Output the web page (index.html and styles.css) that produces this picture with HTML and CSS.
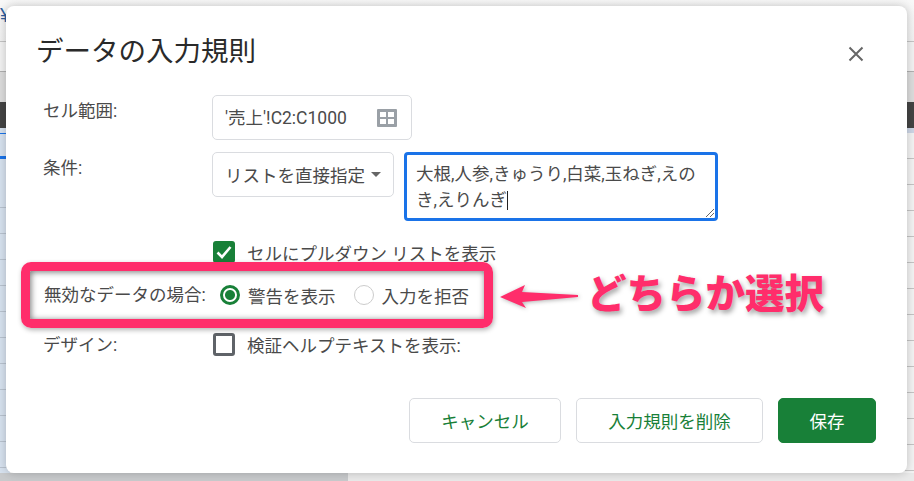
FILE: index.html
```html
<!DOCTYPE html>
<html lang="ja">
<head>
  <meta charset="UTF-8">
  <meta name="viewport" content="width=device-width, initial-scale=1.0">
  <title>データの入力規則</title>
  <link rel="stylesheet" href="styles.css">
</head>
<body>
  <!-- spreadsheet behind the dialog, only its edges show -->
  <div class="sheet">
    <div class="sheet-top">
      <span class="yen">¥</span>
    </div>
    <div class="sheet-bar"></div>
    <div class="sheet-dark"></div>
    <div class="sheet-cells">
      <div class="cells-left">
        <div class="cell-first"></div>
        <div class="cell-accent"></div>
        <div class="cell"></div><div class="cell"></div><div class="cell"></div><div class="cell"></div><div class="cell"></div>
        <div class="cell"></div><div class="cell"></div><div class="cell"></div><div class="cell"></div><div class="cell"></div>
        <div class="cell"></div>
      </div>
      <div class="cells-right">
        <div class="cell"></div><div class="cell"></div><div class="cell"></div><div class="cell"></div><div class="cell"></div>
        <div class="cell"></div><div class="cell"></div><div class="cell"></div><div class="cell"></div><div class="cell"></div>
        <div class="cell"></div><div class="cell"></div><div class="cell"></div>
      </div>
    </div>
    <div class="scrollbar"><div class="scroll-thumb"></div></div>
  </div>

  <div class="dialog">
    <div class="dialog-head">
      <h1 class="dialog-title">データの入力規則</h1>
      <svg class="close-icon" width="16" height="16" viewBox="0 0 16 16">
        <path d="M1.5 1.5L14.5 14.5M14.5 1.5L1.5 14.5" stroke="#666" stroke-width="2" fill="none"/>
      </svg>
    </div>

    <div class="form-row row-range">
      <div class="form-label">セル範囲:</div>
      <div class="range-field">
        <span class="range-text">'売上'!C2:C1000</span>
        <svg width="20" height="18" viewBox="0 0 20 18">
          <rect width="20" height="18" rx="1" fill="#9aa0a6"/>
          <rect x="3" y="3" width="6" height="5" fill="#fff"/>
          <rect x="11" y="3" width="6" height="5" fill="#fff"/>
          <rect x="3" y="10" width="6" height="5" fill="#fff"/>
          <rect x="11" y="10" width="6" height="5" fill="#fff"/>
        </svg>
      </div>
    </div>

    <div class="form-row row-cond">
      <div class="form-label">条件:</div>
      <div class="select-field">リストを直接指定<span class="select-arrow"></span></div>
      <div class="list-input">
        <div class="list-text">大根,人参,きゅうり,白菜,玉ねぎ,えのき,えりんぎ<span class="caret"></span></div>
        <svg class="grip" width="10" height="10" viewBox="0 0 10 10">
          <path d="M1 9L9 1M5 9L9 5" stroke="#666" stroke-width="1" fill="none"/>
        </svg>
      </div>
    </div>

    <div class="form-row row-dropdown">
      <div class="form-label"></div>
      <span class="check check-on">
        <svg width="16" height="14" viewBox="0 0 16 14">
          <path d="M1.5 7.5L6 12L14.5 2" stroke="#fff" stroke-width="2.6" fill="none"/>
        </svg>
      </span>
      <span class="check-text">セルにプルダウン リストを表示</span>
    </div>

    <div class="form-row row-invalid">
      <div class="invalid-label">無効なデータの場合:</div>
      <span class="radio radio-on"></span>
      <span class="radio-text">警告を表示</span>
      <span class="radio"></span>
      <span class="radio-text">入力を拒否</span>
    </div>

    <div class="form-row row-design">
      <div class="form-label design-label">デザイン:</div>
      <span class="check"></span>
      <span class="check-text">検証ヘルプテキストを表示:</span>
    </div>

    <div class="dialog-buttons">
      <div class="btn btn-cancel">キャンセル</div>
      <div class="btn btn-delete">入力規則を削除</div>
      <div class="btn btn-save">保存</div>
    </div>
  </div>

  <!-- annotation drawn over the screenshot -->
  <div class="mark-box"></div>
  <svg class="mark-arrow" width="84" height="30" viewBox="0 0 84 30">
    <polygon points="2,13 27,1 24,8 80,11 80,13 24,18 28,24" fill="#ff2d6b"/>
  </svg>
  <div class="mark-text">どちらか選択</div>
</body>
</html>
```

FILE: styles.css
```css
* {
  box-sizing: border-box;
}
html, body {
  margin: 0;
  padding: 0;
}
body {
  width: 914px;
  height: 481px;
  overflow: hidden;
  position: relative;
  font-family: Roboto, "Noto Sans CJK JP", sans-serif;
  font-size: 17.5px;
  color: #4a4a4a;
  background: #fff;
}

/* sheet behind */
.sheet {
  display: flex;
  flex-direction: column;
  height: 481px;
  background: #f3f3f3;
}
.sheet-top {
  height: 42px;
  flex: none;
  padding-top: 5px;
  background: linear-gradient(#f8f8f8, #f1f1f1);
  border-bottom: 1px solid #c4c4c4;
  line-height: 20px;
}
.yen {
  color: #2f5f9f;
  font-size: 20px;
  font-family: "Liberation Sans", sans-serif;
}
.sheet-bar {
  height: 60px;
  flex: none;
  background: linear-gradient(#f2f2f2 0, #f2f2f2 29px, #b0b0b0 29px, #b0b0b0 30px, #dcdcdc 30px);
}
.sheet-dark {
  height: 26px;
  flex: none;
  background: #444;
}
.sheet-cells {
  flex: 1;
  display: flex;
  justify-content: space-between;
}
.cells-left {
  width: 10px;
  background: #d7e2ef;
  border-top: 5px solid #d7e2ef;
}
.cell-first {
  height: 1px;
  margin-top: 0;
  background: #1a73e8;
}
.cell-accent {
  height: 26px;
  margin-top: 22px;
  border-top: 3px solid #1a73e8;
}
.cells-left .cell {
  height: 26px;
  border-bottom: 1px solid #b9c3cf;
}
.cells-right {
  width: 10px;
  border-top: 5px solid #cdd6e6;
}
.cells-right .cell {
  height: 26px;
  border-bottom: 1px solid #c4c4c4;
}
.scrollbar {
  height: 8px;
  flex: none;
  background: #e9e9e9;
}
.scroll-thumb {
  width: 348px;
  height: 8px;
  background: #c8cacc;
}

/* dialog */
.dialog {
  position: absolute;
  left: 6px;
  top: 6px;
  width: 901px;
  height: 467px;
  background: #fff;
  border-radius: 8px;
  box-shadow: 0 0 10px rgba(0,0,0,0.22);
  padding-top: 30px;
}
.dialog-head {
  display: flex;
  justify-content: space-between;
  align-items: center;
  height: 32px;
  padding: 0 43px 0 30px;
  margin-bottom: 27px;
}
.dialog-title {
  margin: 0;
  font-size: 27.5px;
  font-weight: 400;
  line-height: 32px;
  color: #2a2a2a;
  letter-spacing: 0;
  white-space: nowrap;
}
.close-icon {
  margin-top: 3px;
}
.form-row {
  display: flex;
  padding-left: 37px;
}
.form-label {
  width: 169px;
  flex: none;
}
.row-range {
  height: 45px;
  margin-bottom: 12px;
}
.row-range .form-label {
  padding-top: 3px;
  line-height: 26px;
}
.range-field {
  width: 200px;
  height: 45px;
  border: 1px solid #dadce0;
  border-radius: 5px;
  padding: 0 14px 0 12px;
  display: flex;
  align-items: center;
  justify-content: space-between;
}
.range-text {
  margin-top: -2px;
}
.row-cond {
  height: 69px;
  margin-bottom: 20px;
}
.row-cond .form-label {
  padding-top: 3px;
  line-height: 26px;
}
.select-field {
  width: 182px;
  height: 45px;
  border: 1px solid #dadce0;
  border-radius: 5px;
  padding-left: 12px;
  display: flex;
  align-items: center;
  white-space: nowrap;
}
.select-arrow {
  margin-left: 6px;
  border-style: solid;
  border-width: 5px 5px 0 5px;
  border-color: #666 transparent transparent transparent;
}
.list-input {
  position: relative;
  width: 314px;
  height: 69px;
  margin-left: 10px;
  border: 3px solid #1a73e8;
  border-radius: 4px;
  padding: 6px 0 0 9px;
}
.list-text {
  width: 286px;
  line-height: 26px;
}
.caret {
  display: inline-block;
  width: 1px;
  height: 19px;
  background: #222;
  vertical-align: -4px;
}
.grip {
  position: absolute;
  right: 0;
  bottom: 0;
}
.row-dropdown {
  height: 22px;
  align-items: center;
  margin-bottom: 22px;
}
.check {
  width: 22px;
  height: 23px;
  flex: none;
  margin-left: 1px;
  border: 3px solid #5f6368;
  border-radius: 3px;
}
.check-on {
  display: flex;
  align-items: center;
  justify-content: center;
  height: 22px;
  border: none;
  background: #188038;
}
.check-text {
  margin-left: 12px;
  white-space: nowrap;
}
.row-invalid {
  height: 20px;
  align-items: center;
  margin-bottom: 28px;
}
.invalid-label {
  width: 176px;
  flex: none;
  position: relative;
  left: 1px;
  top: -2px;
  white-space: nowrap;
}
.radio {
  width: 20px;
  height: 20px;
  flex: none;
  border: 1px solid #ccc;
  border-radius: 50%;
  margin-left: 1px;
}
.radio-on {
  border: 3px solid #188038;
  background: radial-gradient(circle, #188038 0, #188038 4.5px, #fff 5.5px);
}
.radio-text {
  margin-left: 8px;
  margin-right: 17px;
  white-space: nowrap;
}
.row-design {
  height: 23px;
  align-items: center;
  margin-bottom: 42px;
}
.design-label {
  margin-top: -3px;
}
.dialog-buttons {
  display: flex;
  justify-content: flex-end;
  gap: 15px;
  padding-right: 31px;
}
.btn {
  height: 45px;
  border: 1px solid #dadce0;
  border-radius: 5px;
  display: flex;
  align-items: center;
  justify-content: center;
  color: #188038;
}
.btn-cancel {
  width: 152px;
}
.btn-delete {
  width: 187px;
}
.btn-save {
  width: 98px;
  color: #fff;
  background: #188038;
  border-color: #188038;
}

/* annotation */
.mark-box {
  position: absolute;
  left: 21px;
  top: 262px;
  width: 472px;
  height: 66px;
  border: 9px solid #ff2d6b;
  border-radius: 10px;
  box-shadow: 1px 2px 5px rgba(0,0,0,0.3), inset 1px 1px 6px rgba(0,0,0,0.55);
}
.mark-arrow {
  position: absolute;
  left: 498px;
  top: 284px;
  filter: drop-shadow(1px 1px 2px rgba(0,0,0,0.3));
}
.mark-text {
  position: absolute;
  left: 587px;
  top: 267px;
  font-size: 39.5px;
  line-height: 56px;
  font-weight: 900;
  white-space: nowrap;
  color: #ff2d6b;
  -webkit-text-stroke: 4px #fff;
  paint-order: stroke fill;
  text-shadow: 2px 3px 5px rgba(0,0,0,0.35);
}
```
